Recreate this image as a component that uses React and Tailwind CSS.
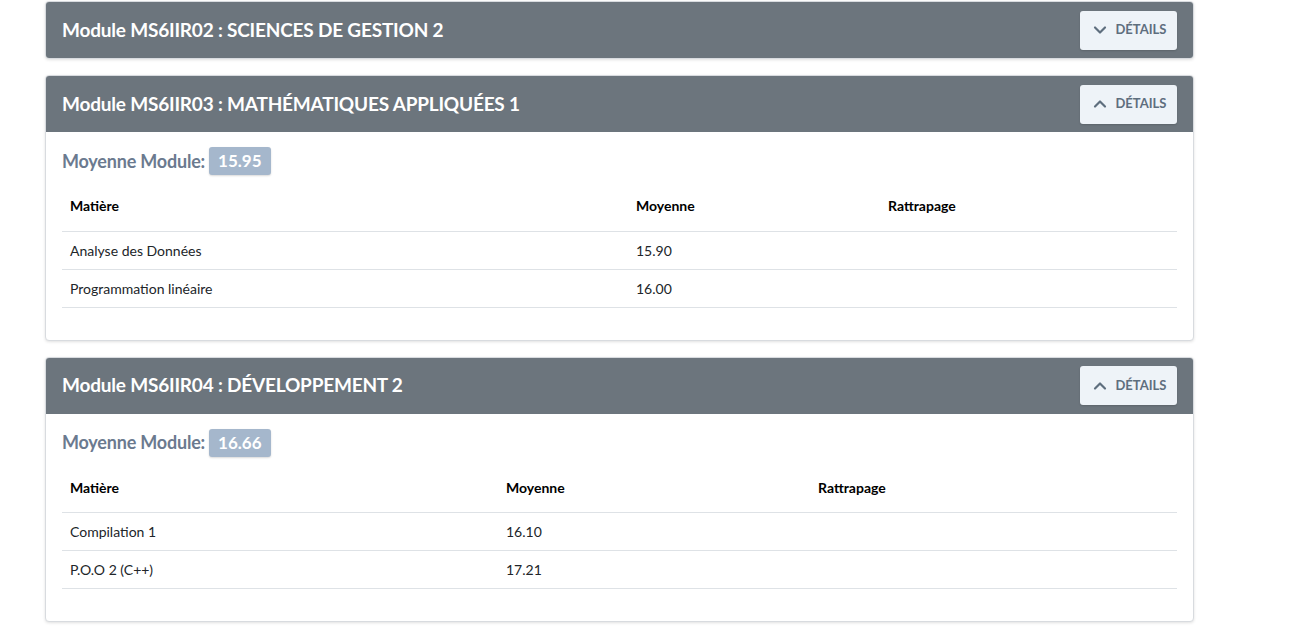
import { ChevronDown, ChevronUp } from 'lucide-react';

const modules = [
    { code: 'MS6IIR02', title: 'SCIENCES DE GESTION 2', open: false },
    {
        code: 'MS6IIR03', title: 'MATHÉMATIQUES APPLIQUÉES 1', open: true, moyenne: '15.95',
        cols: ['w-[566px]', 'w-[252px]'],
        matieres: [
            { nom: 'Analyse des Données', moy: '15.90' },
            { nom: 'Programmation linéaire', moy: '16.00' },
        ],
    },
    {
        code: 'MS6IIR04', title: 'DÉVELOPPEMENT 2', open: true, moyenne: '16.66',
        cols: ['w-[436px]', 'w-[312px]'],
        matieres: [
            { nom: 'Compilation 1', moy: '16.10' },
            { nom: 'P.O.O 2 (C++)', moy: '17.21' },
        ],
    },
];

const ModuleCard = ({ mod }) => (
    <div className="bg-white border border-[#d8dbdf] rounded-[4px] shadow-[0_1px_3px_rgba(0,0,0,0.12)] overflow-hidden">
        <div className="h-[56px] bg-[#6c757d] flex items-center justify-between pl-4 pr-4">
            <h2 className="text-white text-[19px] font-bold tracking-[-0.2px]">
                Module {mod.code} : {mod.title}
            </h2>
            <button className="h-[39px] w-[97px] bg-[#eef3f8] rounded-[3px] flex items-center justify-center gap-[5px] text-[#5e6e7e] text-[13px] font-bold shadow-[0_1px_2px_rgba(0,0,0,0.15)]">
                {mod.open ? <ChevronUp size={20} strokeWidth={2.6} /> : <ChevronDown size={20} strokeWidth={2.6} />}
                DÉTAILS
            </button>
        </div>
        {mod.open && (
            <div className="px-4 pt-[15px] pb-[32px]">
                <div className="flex items-center gap-[4px] h-[28px]">
                    <span className="text-[18px] font-bold text-[#6b7a8f] tracking-[-0.2px]">Moyenne Module:</span>
                    <span className="bg-[#a5b7cc] text-white text-[17px] font-bold px-[9px] h-[28px] leading-[28px] rounded-[3px] shadow-[0_1px_2px_rgba(0,0,0,0.15)]">
                        {mod.moyenne}
                    </span>
                </div>
                <table className="w-full text-left text-[14px] text-[#212529] mt-[6px] table-fixed">
                    <thead>
                        <tr className="border-b border-[#dee2e6]">
                            <th className={`${mod.cols[0]} px-2 h-[50px] font-bold text-black`}>Matière</th>
                            <th className={`${mod.cols[1]} px-2 font-bold text-black`}>Moyenne</th>
                            <th className="px-2 font-bold text-black">Rattrapage</th>
                        </tr>
                    </thead>
                    <tbody>
                        {mod.matieres.map((m) => (
                            <tr key={m.nom} className="border-b border-[#dee2e6]">
                                <td className="px-2 h-[38px]">{m.nom}</td>
                                <td className="px-2">{m.moy}</td>
                                <td className="px-2"></td>
                            </tr>
                        ))}
                    </tbody>
                </table>
            </div>
        )}
    </div>
);

export default function App() {
    return (
        <div className="min-h-screen bg-white font-['Lato',sans-serif]">
            <div className="w-[1149px] ml-[45px] pt-[1px] flex flex-col gap-[16px]">
                {modules.map((mod) => (
                    <ModuleCard key={mod.code} mod={mod} />
                ))}
            </div>
        </div>
    );
}
